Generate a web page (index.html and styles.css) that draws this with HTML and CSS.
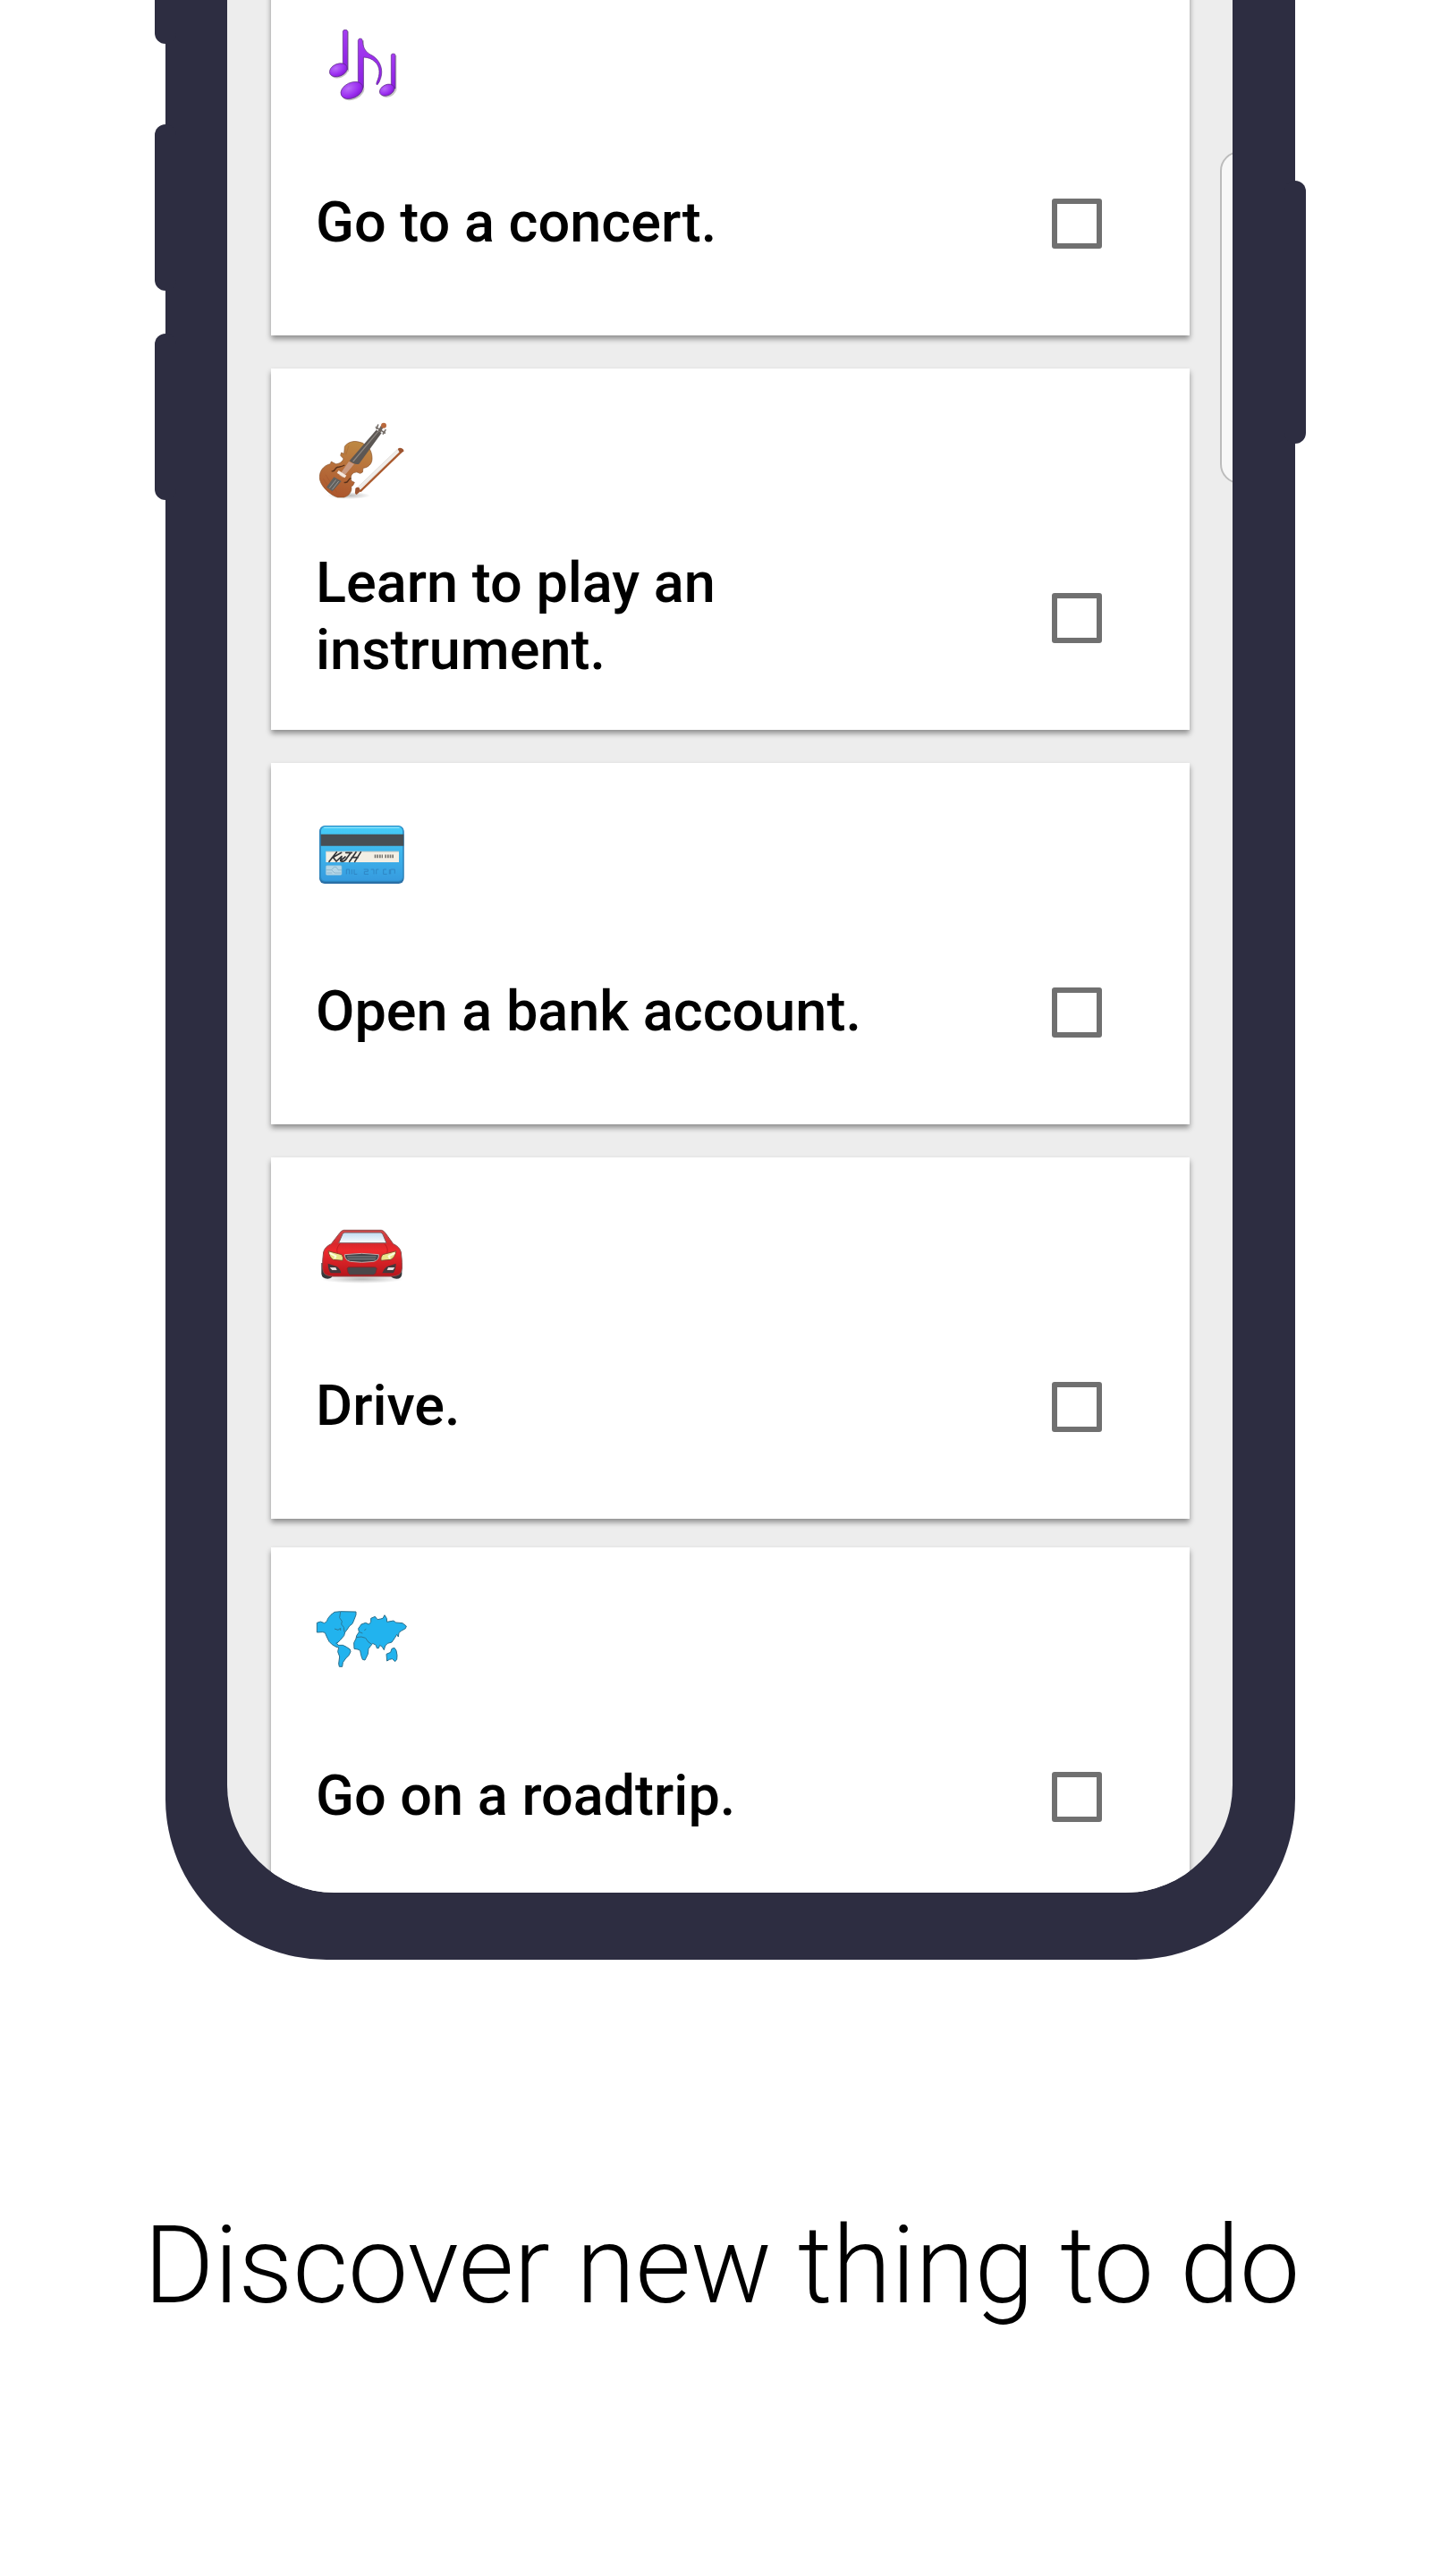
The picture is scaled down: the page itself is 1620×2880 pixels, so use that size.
FILE: index.html
```html
<!DOCTYPE html>
<html lang="en">
<head>
<meta charset="utf-8">
<meta name="viewport" content="width=device-width, initial-scale=1">
<title>Discover new thing to do</title>
<link rel="stylesheet" href="styles.css">
</head>
<body>
<main class="promo">
  <section class="phone">
    <span class="key key-silent"></span>
    <span class="key key-up"></span>
    <span class="key key-down"></span>
    <span class="key key-power"></span>
    <div class="screen">
      <ul class="cards">
        <li class="card">
          <svg class="icon" viewBox="39 33 312 312" aria-hidden="true">
            <defs>
              <linearGradient id="stem" x1="0" y1="0" x2="0" y2="1"><stop offset="0" stop-color="#a63df2"/><stop offset="1" stop-color="#8a1fe0"/></linearGradient>
              <radialGradient id="head" cx=".4" cy=".3" r=".8"><stop offset="0" stop-color="#b96cf8"/><stop offset=".6" stop-color="#9a2cf0"/><stop offset="1" stop-color="#7a18c4"/></radialGradient>
            </defs>
            <g fill="#000" opacity=".22" transform="translate(4 4)">
              <path d="M132 72h14v134h-14zM292 152h14v118h-14zM183 102h14v162h-14z"/>
              <ellipse cx="114" cy="205" rx="31" ry="22" transform="rotate(-22 114 205)"/>
              <ellipse cx="160" cy="273" rx="40" ry="27" transform="rotate(-25 160 273)"/>
              <ellipse cx="279" cy="272" rx="27" ry="19" transform="rotate(-25 279 272)"/>
            </g>
            <g fill="url(#stem)" stroke="#5b2a83" stroke-width="2">
              <path d="M130 76q0-6 8-6t8 6v128h-16z"/>
              <path d="M292 155q0-5 7-5t7 5v112h-14z"/>
              <path d="M181 106q1-7 8-7 6 0 7 8c2 32 18 42 34 50 26 16 36 48 27 75q-4 15-12 23-4-2-2-8c12-26 14-52-6-70q-14-14-38-15v100q-2 10-18 10z"/>
            </g>
            <g fill="url(#head)" stroke="#5b2a83" stroke-width="2">
              <ellipse cx="115" cy="205" rx="31" ry="21" transform="rotate(-22 115 205)"/>
              <ellipse cx="160" cy="273" rx="39" ry="26" transform="rotate(-25 160 273)"/>
              <ellipse cx="278" cy="272" rx="26" ry="18" transform="rotate(-25 278 272)"/>
            </g>
          </svg>
          <div class="row">
            <label class="title" for="todo-concert">Go to a concert.</label>
            <input class="tick" type="checkbox" id="todo-concert">
          </div>
        </li>
        <li class="card">
          <svg class="icon" viewBox="39 6 312 312" aria-hidden="true">
            <defs>
              <linearGradient id="wood" x1=".6" y1="0" x2=".4" y2="1"><stop offset="0" stop-color="#bd8842"/><stop offset=".45" stop-color="#b8713c"/><stop offset="1" stop-color="#ac562c"/></linearGradient>
              <radialGradient id="floor"><stop offset="0" stop-color="#000" stop-opacity=".28"/><stop offset="1" stop-color="#000" stop-opacity="0"/></radialGradient>
            </defs>
            <ellipse cx="150" cy="282" rx="72" ry="12" fill="url(#floor)"/>
            <path d="M136 118C144 104 166 96 186 103Q198 104 205 113C220 120 228 138 228 158C228 176 216 188 198 190L196 204L188 208Q176 200 166 206C156 212 154 226 160 234L169 238L164 248L158 252C162 268 150 284 134 288H112C88 280 60 256 53 230C48 204 62 182 88 176L91 168L98 172L106 176C118 176 130 168 132 158L122 148L125 138L134 142Z" fill="url(#wood)" stroke="#8a5228" stroke-width="2" stroke-linejoin="round"/>
            <path d="M72 212l38 60M64 225l30 46M150 115l-10 30" fill="none" stroke="#8d4825" stroke-width="2" opacity=".4"/>
            <path d="M242 62L260 72L184 176Q170 180 152 166Z" fill="#5c5754"/>
            <path d="M248 68L164 168" fill="none" stroke="#8b8580" stroke-width="4"/>
            <path d="M150 168l-32 46 12 8 38-46z" fill="#c99a82"/>
            <path d="M116 198l26 17-6 8-26-17z" fill="#f4e8df"/>
            <path d="M100 220l25 14-30 34-20-14z" fill="#62605d"/>
            <path d="M107 229l-22 28M116 234l-22 28" stroke="#9b9995" stroke-width="3"/>
            <path d="M92 200q8 2 12-6t14-8q10-2 18-6M134 238q10 2 14-6t10-8" fill="none" stroke="#58301a" stroke-width="4"/>
            <path d="M241 53l30 19M248 45l-5 13M273 62l-8 13" stroke="#77706b" stroke-width="5" stroke-linecap="round"/>
            <path d="M252 68l10-18" stroke="#6b625c" stroke-width="10"/>
            <circle cx="267" cy="47" r="9" fill="#b8683c"/>
            <path d="M312 128L180 254l6 6 136-124z" fill="#f1eeeb" stroke="#d8d4d0" stroke-width="2"/>
            <path d="M327 134L188 268" stroke="#aa592d" stroke-width="7"/>
            <path d="M314 126q6-6 14-2 8 4 6 10l-12 6zM172 258q6-6 12-3l6 12-14 12q-6-2-5-8z" fill="#9d5430"/>
          </svg>
          <div class="row">
            <label class="title" for="todo-instrument">Learn to play an instrument.</label>
            <input class="tick" type="checkbox" id="todo-instrument">
          </div>
        </li>
        <li class="card">
          <svg class="icon" viewBox="39 9 312 312" aria-hidden="true">
            <defs>
              <linearGradient id="plastic" x1="0" y1="0" x2="0" y2="1"><stop offset="0" stop-color="#45cdf8"/><stop offset="1" stop-color="#369bdf"/></linearGradient>
            </defs>
            <rect x="51" y="71" width="284" height="193" rx="18" fill="#2a6fa6"/>
            <rect x="52" y="69" width="282" height="188" rx="17" fill="#2e8fc8"/>
            <rect x="57" y="73" width="273" height="181" rx="14" fill="url(#plastic)"/>
            <path d="M68 76h250" stroke="#8be2fc" stroke-width="4" stroke-linecap="round"/>
            <path d="M56 98h278v39H56z" fill="#474f55"/>
            <path d="M73 156h245v36H73z" fill="#f3efe4"/>
            <path d="M73 156h245" stroke="#b9c3c4" stroke-width="3"/>
            <path d="M84 190l25-32M93 178l32-18M98 176l10 13 18-17-4 15 16-13M124 189q12 2 20-12l13-17M140 160h20M152 190l22-32M170 190l20-32M160 176h20" fill="none" stroke="#33363a" stroke-width="5" stroke-linecap="round" stroke-linejoin="round"/>
            <path d="M236 172h28M271 172h30" stroke="#77756f" stroke-width="11" stroke-dasharray="5 3"/>
            <rect x="73" y="203" width="53" height="32" rx="4" fill="#b4d6e7" stroke="#83bddb" stroke-width="2"/>
            <path d="M74 218h18l8-10h8l6 10h12M92 218l10 10h22M76 228h18" fill="none" stroke="#7fabc2" stroke-width="2"/>
            <path d="M142 232v-16h10v16M160 216v16M168 216v16h10M200 216h14v7h-12v9h14M224 216h10v16M242 232v-16h8M266 216h10M266 216v16h12M286 216v16M290 232v-16h14v14" fill="none" stroke="#2f86c4" stroke-width="3"/>
          </svg>
          <div class="row">
            <label class="title" for="todo-bank">Open a bank account.</label>
            <input class="tick" type="checkbox" id="todo-bank">
          </div>
        </li>
        <li class="card">
          <svg class="icon" viewBox="39 -18 312 312" aria-hidden="true">
            <defs>
              <linearGradient id="paint" x1="0" y1="0" x2="0" y2="1"><stop offset="0" stop-color="#d24a4a"/><stop offset=".3" stop-color="#d9282c"/><stop offset=".45" stop-color="#ee2a2e"/><stop offset="1" stop-color="#b5151b"/></linearGradient>
              <linearGradient id="glass" x1="0" y1="0" x2="0" y2="1"><stop offset="0" stop-color="#bfdcf0"/><stop offset="1" stop-color="#fafdff"/></linearGradient>
            </defs>
            <ellipse cx="194" cy="240" rx="140" ry="15" fill="url(#floor)"/>
            <path d="M58 186h38v40q-2 13-17 13-19 0-21-16zM290 186h38v38q-2 15-18 15-18 0-20-13z" fill="#35383a"/>
            <path d="M133 76h126q8 1 14 10l26 36q22 10 26 28 4 26 3 54-1 14-8 20-10 6-26 7H96q-16-1-26-7-7-6-8-20-1-28 3-54 4-18 26-28l28-36q6-9 14-10z" fill="url(#paint)" stroke="#8c4a4a" stroke-width="3"/>
            <path d="M136 84h120q6 1 8 6l12 29H116l13-30q2-4 7-5z" fill="url(#glass)" stroke="#805c60" stroke-width="3"/>
            <path d="M120 122q-14 16-8 30M270 122q14 16 8 30" fill="none" stroke="#c01a1f" stroke-width="3"/>
            <path d="M136 158q58-8 114 0 2 18-16 23-40 6-80 0-18-5-18-23z" fill="#42464a" stroke="#c5a9aa" stroke-width="3"/>
            <path d="M144 165h98M146 173h94" stroke="#868b90" stroke-width="3"/>
            <path d="M81 146l45 12q8 10 3 20l-32-3q-12-8-16-29zM309 146l-46 12q-8 10-5 20l33-3q14-8 18-29z" fill="#e9e58b" stroke="#8d4430" stroke-width="3"/>
            <path d="M86 153l20 10-4 8M304 153l-20 10 4 8" fill="none" stroke="#fdfce0" stroke-width="6"/>
            <path d="M144 204q2-4 8-4h84q6 0 8 4-2 20-10 22h-80q-8-2-10-22z" fill="#4a474a" stroke="#8f2226" stroke-width="3"/>
            <path d="M80 188l30 10q12 8 14 22H90q-10-10-10-32zM308 188l-30 10q-12 8-16 22h36q10-10 10-32z" fill="#45383b"/>
            <path d="M86 201h20l4 9H94zM304 201h-22l-4 9h20z" fill="#e4dede"/>
          </svg>
          <div class="row">
            <label class="title" for="todo-drive">Drive.</label>
            <input class="tick" type="checkbox" id="todo-drive">
          </div>
        </li>
        <li class="card card-last">
          <svg class="icon" viewBox="39 0 312 312" aria-hidden="true">
            <g fill="#22b3ee" stroke="#2b6f8c" stroke-width="3" stroke-linejoin="round">
              <path d="M43 103L55 99 68 104 76 98 80 88 90 76 102 67 122 65 174 66 174 76 168 92 162 106 152 114 144 126 137 135 134 146 122 160 110 172 114 178 130 178 142 184 154 192 156 200 150 212 140 222 130 236 128 250 118 250 116 240 119 216 113 200 116 186 108 184 94 176 84 166 76 150 70 136 62 134 43 135Z"/>
              <path d="M184 134L182 122 192 108 206 103 218 108 224 100 224 88 238 82 246 92 256 90 264 88 270 77 277 88 278 100 300 96 308 102 330 104 343 114 340 122 326 130 318 136 316 150 311 142 304 154 294 168 280 172 272 180 268 194 262 184 254 178 250 188 244 188 241 178 230 172 222 182 216 190 214 208 204 228 196 226 191 212 188 196 180 192 168 190 167 170 174 156 176 146Z"/>
              <path d="M276 208L290 202 294 190 303 187 309 196 312 212 311 226 305 233 296 224 286 226 278 231Z"/>
            </g>
            <path d="M122 66l-3 20 8 12-2 10 8 10 2 16M102 123l12 4 8-6v8M106 172l8-4M174 152l18-2 14 4 10 14 10 6M186 134l10 4M202 128l6-4" fill="none" stroke="#2b7797" stroke-width="3"/>
          </svg>
          <div class="row">
            <label class="title" for="todo-roadtrip">Go on a roadtrip.</label>
            <input class="tick" type="checkbox" id="todo-roadtrip">
          </div>
        </li>
      </ul>
      <span class="handle"></span>
    </div>
  </section>
  <h1 class="caption">Discover new thing to do</h1>
</main>
</body>
</html>
```

FILE: styles.css
```css
* {
  box-sizing: border-box;
}

body {
  margin: 0;
  background: #fff;
  color: #000;
  font-family: Roboto, "Open Sans", sans-serif;
}

.promo {
  display: flex;
  flex-direction: column;
  gap: 272px;
  padding-bottom: 277px;
}

.phone {
  position: relative;
  margin: 0 172px 0 185px;
  padding: 0 70px 75px 69px;
  background: #2d2d41;
  border-radius: 0 0 180px 180px;
}

.key {
  position: absolute;
  left: -12px;
  width: 24px;
  height: 186px;
  background: #2d2d41;
  border-radius: 12px;
}

.key-silent {
  top: 0;
  height: 49px;
  border-radius: 0 0 12px 12px;
}

.key-up {
  top: 139px;
}

.key-down {
  top: 373px;
}

.key-power {
  top: 202px;
  right: -12px;
  left: auto;
  height: 294px;
}

.screen {
  position: relative;
  overflow: hidden;
  padding: 0 48px 0 49px;
  background: #ededed;
  border-radius: 0 0 120px 120px;
}

/* The list is scrolled a little past the top of its first card. */
.cards {
  display: flex;
  flex-direction: column;
  gap: 37px;
  margin: -29px 0 0;
  padding: 0;
  list-style: none;
}

.card {
  display: flex;
  flex-direction: column;
  gap: 50px;
  padding: 50px;
  background: #fff;
  box-shadow: 0 4px 6px rgba(0, 0, 0, 0.4);
}

.card-last {
  margin-top: -5px;
  padding-bottom: 32px;
}

.icon {
  display: block;
  width: 104px;
  height: 104px;
}

.row {
  display: flex;
  align-items: center;
  justify-content: space-between;
  gap: 100px;
  height: 150px;
  padding-right: 48px;
}

.title {
  max-width: 640px;
  padding-bottom: 4px;
  font-size: 63px;
  font-weight: 500;
  line-height: 75px;
}

.tick {
  flex: none;
  width: 56px;
  height: 56px;
  margin: 0;
  appearance: none;
  background: #fff;
  border: 6px solid #707070;
  border-radius: 3px;
}

.tick:checked {
  background: #707070;
}

.handle {
  position: absolute;
  top: 169px;
  right: -30px;
  width: 44px;
  height: 372px;
  background: #f7f7f7;
  border: 2px solid #bcbcbc;
  border-radius: 22px;
}

.caption {
  margin: 0;
  padding-right: 6px;
  font-size: 120px;
  font-weight: 300;
  line-height: 140px;
  text-align: center;
}
```
